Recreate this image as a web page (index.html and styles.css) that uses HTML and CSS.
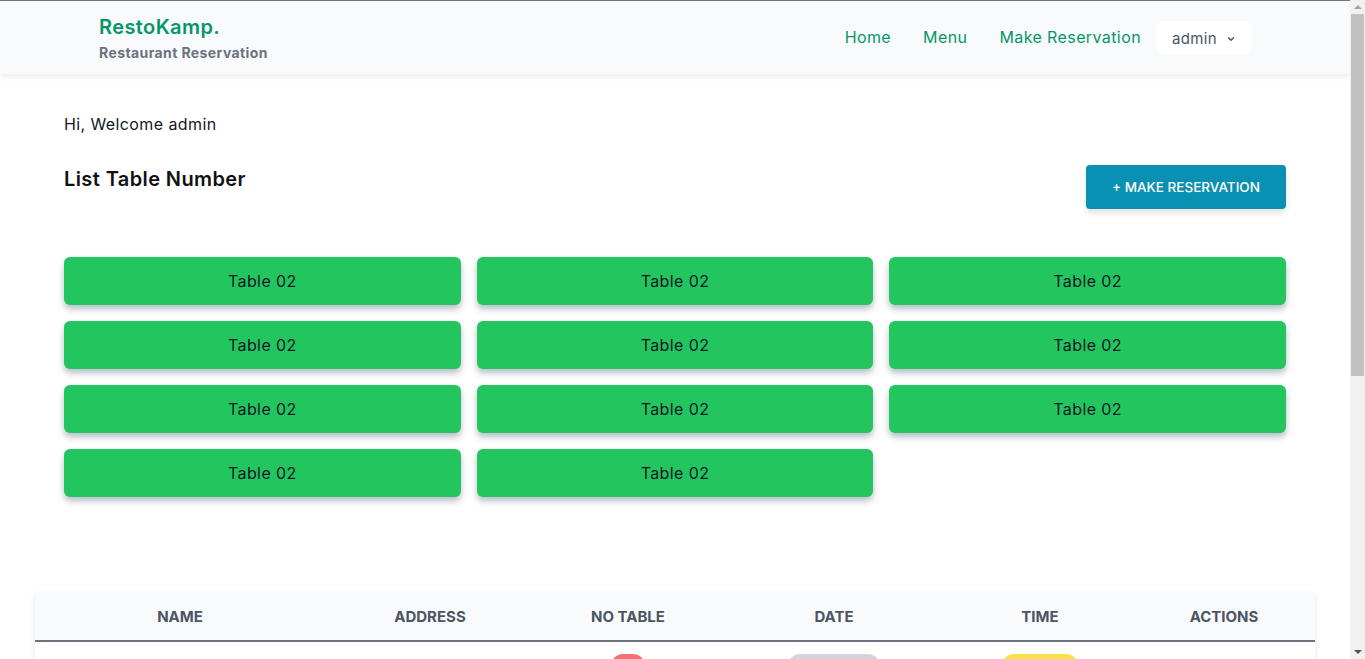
FILE: index.html
```html
<!DOCTYPE html>
<html lang="en">
<head>
<meta charset="utf-8">
<title>RestoKamp. - Restaurant Reservation</title>
<link rel="stylesheet" href="styles.css">
</head>
<body>
<div class="page">
<header class="navbar">
  <div class="nav-inner">
    <div class="brand">
      <div class="brand-title">RestoKamp.</div>
      <div class="brand-sub">Restaurant Reservation</div>
    </div>
    <nav class="nav-links">
      <a class="nav-link" href="#">Home</a>
      <a class="nav-link" href="#">Menu</a>
      <a class="nav-link" href="#">Make Reservation</a>
      <button class="user-menu">admin
        <svg class="chev" width="10" height="10" viewBox="0 0 10 10"><path d="M2.5 3.8 L5 6.3 L7.5 3.8" fill="none" stroke="#4b5563" stroke-width="1.4" stroke-linecap="round" stroke-linejoin="round"/></svg>
      </button>
    </nav>
  </div>
</header>

<main class="main">
  <p class="welcome">Hi, Welcome admin</p>
  <div class="section-head">
    <h2 class="section-title">List Table Number</h2>
    <button class="btn-reserve">+ MAKE RESERVATION</button>
  </div>
  <div class="table-grid">
    <div class="table-card">Table 02</div>
    <div class="table-card">Table 02</div>
    <div class="table-card">Table 02</div>
    <div class="table-card">Table 02</div>
    <div class="table-card">Table 02</div>
    <div class="table-card">Table 02</div>
    <div class="table-card">Table 02</div>
    <div class="table-card">Table 02</div>
    <div class="table-card">Table 02</div>
    <div class="table-card">Table 02</div>
    <div class="table-card">Table 02</div>
  </div>
</main>

<section class="list-wrap">
  <table class="res-table">
    <thead>
      <tr>
        <th class="c-name">Name</th>
        <th class="c-addr">Address</th>
        <th class="c-no">No Table</th>
        <th class="c-date">Date</th>
        <th class="c-time">Time</th>
        <th class="c-act">Actions</th>
      </tr>
    </thead>
    <tbody>
      <tr>
        <td>John Doe</td>
        <td>Jl. Merdeka No. 10</td>
        <td><span class="badge badge-red">02</span></td>
        <td><span class="badge badge-gray">2022-06-12</span></td>
        <td><span class="badge badge-yellow">19:00</span></td>
        <td class="actions">
          <svg width="16" height="16" viewBox="0 0 24 24"><path d="M4 20h4L19 9l-4-4L4 16v4z" fill="none" stroke="#3b82f6" stroke-width="2" stroke-linejoin="round"/></svg>
          <svg width="16" height="16" viewBox="0 0 24 24"><path d="M5 7h14M10 7V4h4v3M7 7l1 13h8l1-13" fill="none" stroke="#ef4444" stroke-width="2" stroke-linejoin="round"/></svg>
        </td>
      </tr>
      <tr>
        <td>Jane Smith</td>
        <td>Jl. Sudirman No. 5</td>
        <td><span class="badge badge-red">02</span></td>
        <td><span class="badge badge-gray">2022-06-13</span></td>
        <td><span class="badge badge-yellow">20:00</span></td>
        <td class="actions">
          <svg width="16" height="16" viewBox="0 0 24 24"><path d="M4 20h4L19 9l-4-4L4 16v4z" fill="none" stroke="#3b82f6" stroke-width="2" stroke-linejoin="round"/></svg>
          <svg width="16" height="16" viewBox="0 0 24 24"><path d="M5 7h14M10 7V4h4v3M7 7l1 13h8l1-13" fill="none" stroke="#ef4444" stroke-width="2" stroke-linejoin="round"/></svg>
        </td>
      </tr>
      <tr>
        <td>Budi Santoso</td>
        <td>Jl. Gatot Subroto 21</td>
        <td><span class="badge badge-red">02</span></td>
        <td><span class="badge badge-gray">2022-06-14</span></td>
        <td><span class="badge badge-yellow">18:30</span></td>
        <td class="actions">
          <svg width="16" height="16" viewBox="0 0 24 24"><path d="M4 20h4L19 9l-4-4L4 16v4z" fill="none" stroke="#3b82f6" stroke-width="2" stroke-linejoin="round"/></svg>
          <svg width="16" height="16" viewBox="0 0 24 24"><path d="M5 7h14M10 7V4h4v3M7 7l1 13h8l1-13" fill="none" stroke="#ef4444" stroke-width="2" stroke-linejoin="round"/></svg>
        </td>
      </tr>
      <tr>
        <td>Siti Aminah</td>
        <td>Jl. Diponegoro 7</td>
        <td><span class="badge badge-red">02</span></td>
        <td><span class="badge badge-gray">2022-06-15</span></td>
        <td><span class="badge badge-yellow">12:00</span></td>
        <td class="actions">
          <svg width="16" height="16" viewBox="0 0 24 24"><path d="M4 20h4L19 9l-4-4L4 16v4z" fill="none" stroke="#3b82f6" stroke-width="2" stroke-linejoin="round"/></svg>
          <svg width="16" height="16" viewBox="0 0 24 24"><path d="M5 7h14M10 7V4h4v3M7 7l1 13h8l1-13" fill="none" stroke="#ef4444" stroke-width="2" stroke-linejoin="round"/></svg>
        </td>
      </tr>
    </tbody>
  </table>
</section>
</div>

<div class="scrollbar" aria-hidden="true">
  <div class="sb-arrow sb-up"></div>
  <div class="sb-thumb"></div>
  <div class="sb-arrow sb-down"></div>
</div>
</body>
</html>
```

FILE: styles.css
```css
* { box-sizing: border-box; }

html, body {
  margin: 0;
  padding: 0;
}

body {
  font-family: "Inter", "Noto Sans", sans-serif;
  color: #111827;
  background: #ffffff;
  letter-spacing: 0.025em;
}

.page {
  width: 1350px;
  min-height: 900px;
}

.navbar {
  background: #f9fafb;
  border-top: 1px solid #6b7280;
  box-shadow: 0 3px 6px rgba(0, 0, 0, 0.08);
}

.nav-inner {
  max-width: 1280px;
  margin: 0 auto;
  padding: 12px 64px 11px;
  display: flex;
  align-items: center;
  justify-content: space-between;
}

.brand-title {
  font-size: 20px;
  line-height: 28px;
  font-weight: 600;
  color: #059669;
}

.brand-sub {
  margin-top: 2px;
  font-size: 14px;
  line-height: 20px;
  font-weight: 700;
  color: #6b7280;
}

.nav-links {
  display: flex;
  align-items: center;
  gap: 32px;
  margin-bottom: 3px;
}

.nav-link {
  font-size: 16px;
  color: #059669;
  text-decoration: none;
  line-height: 24px;
}

.user-menu {
  margin-left: -16px;
  margin-top: 1px;
  width: 94px;
  height: 33px;
  background: #ffffff;
  border: none;
  border-radius: 6px;
  font-family: inherit;
  letter-spacing: 0.025em;
  font-size: 15px;
  color: #4b5563;
  display: flex;
  align-items: center;
  justify-content: center;
  gap: 9px;
  padding: 2px 0 0;
}

.chev { margin-top: 1px; }

.main {
  padding: 38px 64px 0;
}

.welcome {
  margin: 0;
  font-size: 16px;
  line-height: 24px;
  color: #111827;
}

.section-head {
  margin-top: 29px;
  display: flex;
  justify-content: space-between;
  align-items: flex-start;
}

.section-title {
  margin: 0;
  font-size: 20px;
  line-height: 28px;
  font-weight: 600;
  color: #111;
}

.btn-reserve {
  width: 200px;
  height: 44px;
  background: #0891b2;
  color: #ffffff;
  border: none;
  border-radius: 4px;
  font-family: inherit;
  letter-spacing: 0;
  font-size: 13.5px;
  font-weight: 500;
  box-shadow: 0 4px 6px rgba(0, 0, 0, 0.12);
}

.table-grid {
  margin-top: 48px;
  display: grid;
  grid-template-columns: repeat(3, 1fr);
  gap: 16px;
}

.table-card {
  height: 48px;
  background: #22c55e;
  border-radius: 6px;
  display: flex;
  align-items: center;
  justify-content: center;
  font-size: 16px;
  color: #111827;
  padding-bottom: 1px;
  box-shadow: 0 4px 6px rgba(55, 65, 100, 0.35);
}

.list-wrap {
  max-width: 1280px;
  margin: 96px auto 40px;
}

.res-table {
  width: 100%;
  border-collapse: collapse;
  box-shadow: 0 2px 6px rgba(0, 0, 0, 0.1);
  table-layout: fixed;
}

.res-table thead tr {
  background: #f9fafb;
  border-bottom: 2px solid #6b7280;
}

.res-table th {
  height: 48px;
  font-size: 15px;
  font-weight: 700;
  letter-spacing: 0;
  text-transform: uppercase;
  color: #4b5563;
  text-align: center;
  padding: 0;
}

.c-name { width: 290px; }
.c-addr { width: 210px; }
.c-no { width: 186px; }
.c-date { width: 226px; }
.c-time { width: 186px; }
.c-act { width: 182px; }

.res-table td {
  padding: 12px 0;
  text-align: center;
  font-size: 14px;
  color: #4b5563;
  border-bottom: 1px solid #e5e7eb;
}

.badge {
  display: inline-block;
  padding: 3px 10px;
  border-radius: 9999px;
  font-size: 12px;
  line-height: 18px;
  color: #111827;
}

.badge-red { background: #f87171; padding: 3px 9px; }
.badge-gray { background: #d1d5db; padding: 3px 10px; }
.badge-yellow { background: #fde047; padding: 3px 22px; }

.actions svg {
  margin: 0 5px;
  vertical-align: middle;
}

/* window scrollbar, drawn over the page's right edge */
.scrollbar {
  position: fixed;
  top: 0;
  right: 0;
  width: 15px;
  height: 100vh;
  background: #f1f1f1;
  display: flex;
  flex-direction: column;
  align-items: center;
}

.sb-arrow {
  width: 0;
  height: 0;
  border-left: 4px solid transparent;
  border-right: 4px solid transparent;
}

.sb-up {
  margin-top: 5px;
  border-bottom: 4px solid #a3a3a3;
}

.sb-down {
  margin-top: auto;
  margin-bottom: 5px;
  border-top: 4px solid #505050;
}

.sb-thumb {
  margin-top: 5px;
  width: 13px;
  height: 362px;
  background: #c1c1c1;
}
```
